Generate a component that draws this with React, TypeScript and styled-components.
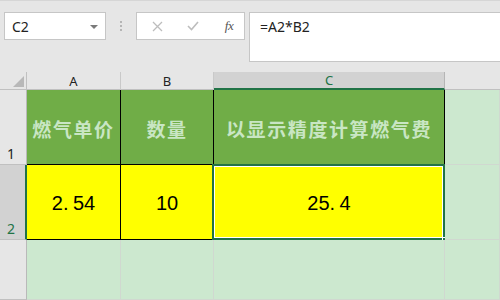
import React from 'react';
import styled, { createGlobalStyle, css } from 'styled-components';

const GlobalStyle = createGlobalStyle`
  * { box-sizing: border-box; }
  html, body { margin: 0; padding: 0; }
  body {
    width: 500px;
    height: 300px;
    overflow: hidden;
    background: #e6e6e6;
    font-family: "Noto Sans", "Liberation Sans", "Noto Sans CJK SC", sans-serif;
  }
`;

const Window = styled.div`
  width: 500px;
  height: 300px;
  display: flex;
  flex-direction: column;
  background: #e6e6e6;
  border-top: 1px solid #d6d6d6;
  overflow: hidden;
`;

const FormulaBar = styled.div`
  height: 60px;
  display: flex;
  align-items: flex-start;
  padding: 11px 0 0 4px;
`;

const NameBox = styled.div`
  width: 102px;
  height: 28px;
  background: #fff;
  border: 1px solid #c6c6c6;
  display: flex;
  align-items: center;
  justify-content: space-between;
  padding: 0 7px 0 7px;
  font-size: 14px;
  color: #222;
`;

const Caret = styled.span`
  width: 0;
  height: 0;
  border-left: 4px solid transparent;
  border-right: 4px solid transparent;
  border-top: 4px solid #7a7a7a;
  margin-top: 1px;
`;

const Grip = styled.div`
  width: 30px;
  height: 28px;
  display: flex;
  flex-direction: column;
  align-items: center;
  justify-content: center;
  gap: 2px;

  span {
    width: 2px;
    height: 2px;
    background: #b5b5b5;
  }
`;

const ButtonBox = styled.div`
  width: 109px;
  height: 28px;
  background: #fff;
  border: 1px solid #c6c6c6;
  display: flex;
  align-items: center;
  padding-left: 10px;
  gap: 16px;
`;

const BarButton = styled.span`
  width: 20px;
  height: 20px;
  display: flex;
  align-items: center;
  justify-content: center;
`;

const FxText = styled.span`
  font-family: "Liberation Serif", serif;
  font-style: italic;
  font-size: 13px;
  color: #555;
  letter-spacing: -0.5px;
`;

const FormulaInput = styled.div`
  flex: 1;
  height: 50px;
  margin-left: 4px;
  background: #fff;
  border: 1px solid #c6c6c6;
  border-right: none;
  padding: 4px 0 0 10px;
  font-size: 14px;
  color: #222;
`;

const Gap = styled.div`
  height: 11px;
`;

const Sheet = styled.div`
  flex: 1;
  display: grid;
  grid-template-columns: 27px 94px 93px 231px 1fr;
  grid-template-rows: 18px 75px 75px 1fr;
`;

const Corner = styled.div`
  position: relative;
  border-right: 1px solid #c0c0c0;
  border-bottom: 1px solid #c0c0c0;

  &::after {
    content: '';
    position: absolute;
    right: 2px;
    bottom: 2px;
    width: 0;
    height: 0;
    border-left: 11px solid transparent;
    border-bottom: 11px solid #b8b8b8;
  }
`;

const ColHead = styled.div<{ $active?: boolean; $blank?: boolean }>`
  display: flex;
  align-items: center;
  justify-content: center;
  font-size: 13px;
  color: #222;
  border-right: 1px solid #c9c9c9;
  border-bottom: 1px solid #c0c0c0;
  ${(p) =>
    p.$active &&
    css`
      background: #d2d2d2;
      color: #217346;
      border-right-color: #b5b5b5;
      border-bottom: 2px solid #217346;
    `}
  ${(p) =>
    p.$blank &&
    css`
      border-right: none;
    `}
`;

const RowHead = styled.div<{ $active?: boolean }>`
  display: flex;
  align-items: flex-end;
  padding: 0 0 1px 7px;
  font-size: 14px;
  color: #222;
  border-right: 1px solid #b9b9b9;
  border-bottom: 1px solid #c0c0c0;
  ${(p) =>
    p.$active &&
    css`
      background: #d2d2d2;
      color: #217346;
      border-right: 2px solid #217346;
    `}
`;

const Cell = styled.div<{ $fill?: 'green' | 'yellow' }>`
  position: relative;
  display: flex;
  align-items: center;
  justify-content: center;
  background: #cce8cf;
  border-right: 1px solid #d0d8d0;
  border-bottom: 1px solid #d0d8d0;
  ${(p) =>
    p.$fill === 'green' &&
    css`
      background: #70ad47;
      border-right-color: #000;
      border-bottom-color: #000;
    `}
  ${(p) =>
    p.$fill === 'yellow' &&
    css`
      background: #ffff00;
      border-right-color: #000;
      border-bottom-color: #000;
    `}
`;

const Title = styled.span`
  font-family: "Noto Sans CJK SC", "Noto Sans", sans-serif;
  font-weight: 700;
  font-size: 19px;
  letter-spacing: 1.6px;
  color: #c9e6c4;
  margin-top: 2px;
`;

const Value = styled.span`
  font-family: "Liberation Sans", "Noto Sans CJK SC", sans-serif;
  font-size: 20px;
  color: #000;
  margin-top: 3px;
`;

const Dot = styled.span`
  display: inline-block;
  width: 10px;
`;

const Selection = styled.div`
  position: absolute;
  left: -2px;
  top: -1px;
  right: -1px;
  bottom: -1px;
  border: 2px solid #217346;
  box-shadow: inset 0 0 0 1px #fff;
  pointer-events: none;
`;

const FillHandle = styled.div`
  position: absolute;
  right: -4px;
  bottom: -4px;
  width: 6px;
  height: 6px;
  background: #217346;
  border: 1px solid #fff;
  border-right: none;
  border-bottom: none;
`;

const App: React.FC = () => {
  return (
    <>
      <GlobalStyle />
      <Window>
        <FormulaBar>
          <NameBox>
            C2
            <Caret />
          </NameBox>
          <Grip>
            <span />
            <span />
            <span />
          </Grip>
          <ButtonBox>
            <BarButton>
              <svg width="11" height="11" viewBox="0 0 11 11">
                <path d="M1 1 L10 10 M10 1 L1 10" stroke="#bdbdbd" strokeWidth="1.3" fill="none" />
              </svg>
            </BarButton>
            <BarButton>
              <svg width="12" height="10" viewBox="0 0 12 10">
                <path d="M1 5 L4.5 8.5 L11 1" stroke="#bdbdbd" strokeWidth="1.6" fill="none" />
              </svg>
            </BarButton>
            <BarButton>
              <FxText>fx</FxText>
            </BarButton>
          </ButtonBox>
          <FormulaInput>=A2*B2</FormulaInput>
        </FormulaBar>
        <Gap />
        <Sheet>
          <Corner />
          <ColHead>A</ColHead>
          <ColHead>B</ColHead>
          <ColHead $active>C</ColHead>
          <ColHead $blank />

          <RowHead>1</RowHead>
          <Cell $fill="green">
            <Title>燃气单价</Title>
          </Cell>
          <Cell $fill="green">
            <Title>数量</Title>
          </Cell>
          <Cell $fill="green">
            <Title>以显示精度计算燃气费</Title>
          </Cell>
          <Cell />

          <RowHead $active>2</RowHead>
          <Cell $fill="yellow">
            <Value>
              2<Dot>.</Dot>54
            </Value>
          </Cell>
          <Cell $fill="yellow">
            <Value>10</Value>
          </Cell>
          <Cell $fill="yellow">
            <Value>
              25<Dot>.</Dot>4
            </Value>
            <Selection />
            <FillHandle />
          </Cell>
          <Cell />

          <RowHead />
          <Cell />
          <Cell />
          <Cell />
          <Cell />
        </Sheet>
      </Window>
    </>
  );
};

export default App;
